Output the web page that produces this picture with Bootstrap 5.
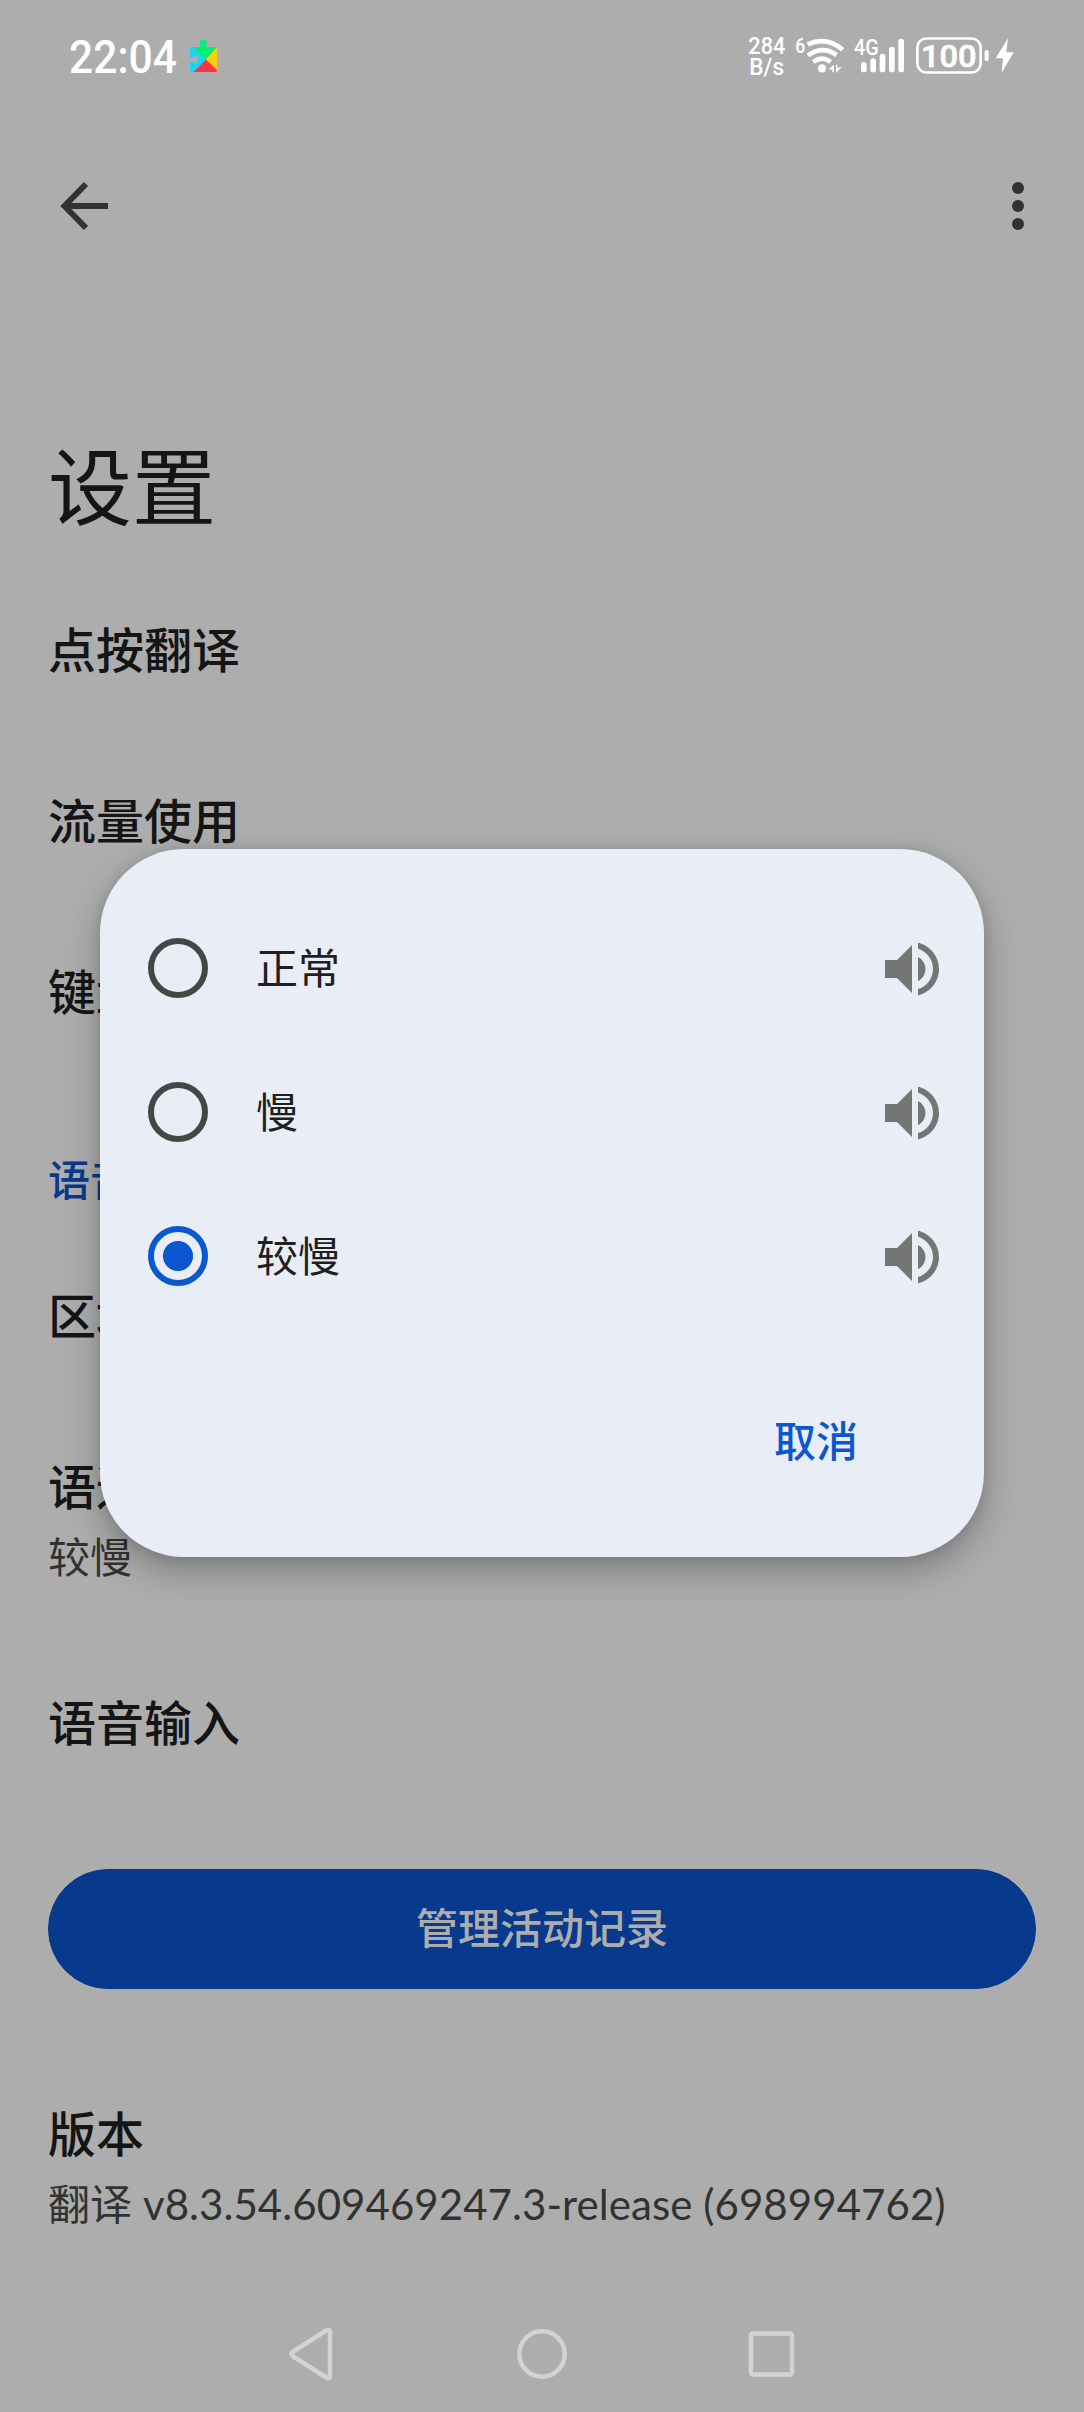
<!DOCTYPE html>
<html lang="zh-CN">
<head>
<meta charset="utf-8">
<meta name="viewport" content="width=device-width, initial-scale=1">
<title>设置</title>
<link href="https://cdn.jsdelivr.net/npm/bootstrap@5.3.0/dist/css/bootstrap.min.css" rel="stylesheet">
<style>
  body { background: #adadad; color: #151515; font-family: "Noto Sans CJK SC", sans-serif; font-size: 42px; }
  .screen { width: 1084px; height: 2412px; }
  svg { display: block; flex: none; }
  .status-bar { height: 112px; padding-left: 69px; }
  .clock { font-family: Roboto, sans-serif; font-weight: 500; font-size: 45.5px; fill: #fff; }
  .puzzle { margin: 39px 0 0 11px; }
  .signals { margin: 20px 34px 0 auto; }
  .signals text { font-family: Roboto, sans-serif; font-weight: 500; fill: #fff; }
  .app-bar { height: 188px; padding: 0 48px; }
  .page-title { font-size: 84px; line-height: 120px; font-weight: 400; margin: 123px 0 0; }
  .settings { padding: 0 48px; }
  .pref { font-size: 48px; line-height: 60px; font-weight: 500; }
  .pref-sub { font-size: 42px; line-height: 60px; color: #303331; font-family: Lato, "Noto Sans CJK SC", sans-serif; letter-spacing: .06px; }
  .pref-head { font-size: 42px; line-height: 60px; font-weight: 500; color: #073a8c; }
  .g-title { margin-top: 74px; } .g-row { margin-top: 111px; } .g-head { margin-top: 129px; }
  .g-first { margin-top: 75px; } .g-sub { margin-top: 13px; } .g-after { margin-top: 103px; }
  .btn-activity { --bs-btn-bg: #073a8c; --bs-btn-color: #adadad; --bs-btn-border-color: #073a8c;
    height: 120px; margin-top: 119px; font-size: 42px; font-weight: 500; line-height: 60px; padding: 0 0 6px; }
  .g-version { margin-top: 112px; }
  .nav-keys { height: 116px; }
  .speed-dialog { left: 100px; top: 849px; width: 884px; height: 708px; border-radius: 84px; background: #e8edf6;
    padding: 47px 36px 0 48px; box-shadow: 0 14px 34px rgba(0,0,0,.28), 0 0 12px rgba(0,0,0,.1); color: #1f1f1f; }
  .speed-row { height: 144px; gap: 48px; }
  .speed-row .form-check-input { width: 60px; height: 60px; border: 6px solid #444746; background-color: transparent; }
  .speed-row .form-check-input:checked { border-color: #0b57d0;
    background: radial-gradient(circle, #0b57d0 14.6px, transparent 15.4px) center / 48px 48px no-repeat; }
  .speed-name { line-height: 60px; padding-bottom: 5px; }
  .btn-cancel { --bs-btn-color: #0b57d0; font-size: 42px; font-weight: 500; line-height: 60px; padding: 0; margin: 81px 90px 0 0; border: 0; }
</style>
<script src="https://cdn.jsdelivr.net/npm/bootstrap@5.3.0/dist/js/bootstrap.bundle.min.js"></script>
</head>
<body>
<div class="screen position-relative overflow-hidden d-flex flex-column">
  <header class="status-bar d-flex align-items-start">
    <svg width="110" height="90" viewBox="0 0 110 90"><text class="clock" x="0" y="73" textLength="108" lengthAdjust="spacingAndGlyphs">22:04</text></svg>
    <svg class="puzzle" width="28" height="34" viewBox="0 0 84 102">
      <path fill="#00f076" d="M6 24H31V18Q27 10 31 4H49Q54 10 49 18V24H75Q81 24 82 30L48 63 2 24Z"/>
      <path fill="#ffcc00" d="M82 24V98L46 62Z"/>
      <path fill="#fb3448" d="M82 94Q81 99 76 99H10L47 61Z"/>
      <path fill="#19d5f5" d="M8 24 47 62 10 99H5Q0 98 0 93V69H8Q11 73 18 72 25 70 25 61 25 53 18 51 11 50 8 54H0V30Q0 24 8 24Z"/>
    </svg>
    <svg class="signals" width="320" height="80" viewBox="0 0 960 240">
      <text x="55" y="101" font-size="70" textLength="111" lengthAdjust="spacingAndGlyphs">284</text>
      <text x="58" y="165" font-size="70" textLength="104" lengthAdjust="spacingAndGlyphs">B/s</text>
      <text x="196" y="99" font-size="63" textLength="30" lengthAdjust="spacingAndGlyphs">6</text>
      <g fill="none" stroke="#fff" stroke-width="14">
        <path d="M233 73Q289 48 338 89"/><path d="M234 106Q277 75 320 105"/><path d="M250 126Q276 106 302 126"/>
      </g>
      <g fill="#fff">
        <circle cx="276" cy="145" r="12.5"/><path d="M296 148 312 134V157H307V149ZM318 134H322V144L336 140 318 158Z"/>
        <rect x="393" y="126" width="17" height="31" rx="8"/><rect x="421" y="115" width="17" height="42" rx="8"/>
        <rect x="449" y="101" width="17" height="56" rx="8"/><rect x="477" y="80" width="17" height="77" rx="8"/>
        <rect x="505" y="56" width="17" height="101" rx="8"/>
        <rect x="764" y="90" width="12" height="33" rx="5"/>
        <path d="M834 55 797 115H819L815 158 851 97H829Z"/>
      </g>
      <text x="372" y="106" font-size="67" textLength="74" lengthAdjust="spacingAndGlyphs">4G</text>
      <rect x="562" y="55.5" width="190" height="102" rx="27" fill="none" stroke="#fff" stroke-width="8"/>
      <text x="573" y="141" font-size="92" stroke="#fff" stroke-width="2" textLength="166" lengthAdjust="spacingAndGlyphs">100</text>
    </svg>
  </header>

  <nav class="app-bar d-flex justify-content-between align-items-center">
    <svg width="72" height="72" viewBox="0 0 72 72" fill="none" stroke="#303331" stroke-width="6"><path d="M60 36H18M38 14 16.500 36 38 58"/></svg>
    <svg width="36" height="72" viewBox="0 0 36 72" fill="#303331"><circle cx="18" cy="18" r="6"/><circle cx="18" cy="36" r="6"/><circle cx="18" cy="54" r="6"/></svg>
  </nav>

  <main class="settings d-flex flex-column">
    <h1 class="page-title">设置</h1>
    <div class="pref g-title">点按翻译</div>
    <div class="pref g-row">流量使用</div>
    <div class="pref g-row">键盘</div>
    <div class="pref-head g-head">语音</div>
    <div class="pref g-first">区域</div>
    <div class="pref g-row">语速</div>
    <div class="pref-sub g-sub">较慢</div>
    <div class="pref g-after">语音输入</div>
    <button class="btn btn-activity rounded-pill w-100" type="button">管理活动记录</button>
    <div class="pref g-version">版本</div>
    <div class="pref-sub g-sub text-nowrap">翻译 v8.3.54.609469247.3-release (698994762)</div>
  </main>

  <footer class="nav-keys mt-auto d-flex justify-content-center align-items-center">
    <svg width="506" height="60" viewBox="0 0 506 60" fill="none" stroke="#d3d3d3" stroke-width="4.500" stroke-linejoin="round">
      <path d="M3.500 28Q1.500 30 3.500 32L38 54Q41 55 41 52V8Q41 5 38 6Z"/><circle cx="253" cy="30" r="22.700"/><rect x="462" y="9.500" width="41" height="41" rx="2"/>
    </svg>
  </footer>

  <section class="speed-dialog position-absolute" role="dialog">
    <label class="speed-row d-flex align-items-center">
      <input class="form-check-input m-0 flex-shrink-0" type="radio" name="speed">
      <span class="speed-name flex-grow-1">正常</span>
      <svg width="72" height="72" viewBox="0 -.33 24 24" fill="#757575"><path d="M3 9v6h4l5 5V4L7 9H3zm13.500 3c0-1.770-1.020-3.290-2.500-4.030v8.050c1.480-.730 2.500-2.250 2.500-4.020zM14 3.230v2.060c2.890.860 5 3.540 5 6.710s-2.110 5.850-5 6.710v2.060c4.010-.910 7-4.490 7-8.770s-2.990-7.860-7-8.770z"/></svg>
    </label>
    <label class="speed-row d-flex align-items-center">
      <input class="form-check-input m-0 flex-shrink-0" type="radio" name="speed">
      <span class="speed-name flex-grow-1">慢</span>
      <svg width="72" height="72" viewBox="0 -.33 24 24" fill="#757575"><path d="M3 9v6h4l5 5V4L7 9H3zm13.500 3c0-1.770-1.020-3.290-2.500-4.030v8.050c1.480-.730 2.500-2.250 2.500-4.020zM14 3.230v2.060c2.890.860 5 3.540 5 6.710s-2.110 5.850-5 6.710v2.060c4.010-.910 7-4.490 7-8.770s-2.990-7.860-7-8.770z"/></svg>
    </label>
    <label class="speed-row d-flex align-items-center">
      <input class="form-check-input m-0 flex-shrink-0" type="radio" name="speed" checked>
      <span class="speed-name flex-grow-1">较慢</span>
      <svg width="72" height="72" viewBox="0 -.33 24 24" fill="#757575"><path d="M3 9v6h4l5 5V4L7 9H3zm13.500 3c0-1.770-1.020-3.290-2.500-4.030v8.050c1.480-.730 2.500-2.250 2.500-4.020zM14 3.230v2.060c2.890.860 5 3.540 5 6.710s-2.110 5.850-5 6.710v2.060c4.010-.910 7-4.490 7-8.770s-2.990-7.860-7-8.770z"/></svg>
    </label>
    <div class="d-flex justify-content-end"><button class="btn btn-cancel" type="button">取消</button></div>
  </section>
</div>
</body>
</html>
